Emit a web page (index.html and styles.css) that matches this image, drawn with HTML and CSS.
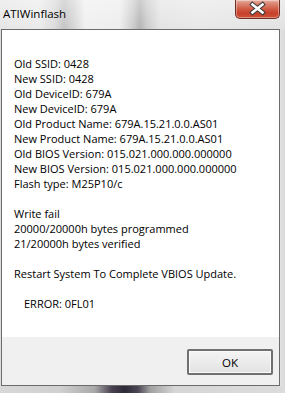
FILE: index.html
```html
<!DOCTYPE html>
<html>
<head>
<meta charset="utf-8">
<link rel="stylesheet" href="styles.css">
</head>
<body>
<div class="frame">
  <div class="titlebar">
    <span class="title">ATIWinflash</span>
    <div class="close">
      <svg width="45" height="19" viewBox="0 0 45 19">
        <path d="M17.5 5.5 L27.5 13.5 M27.5 5.5 L17.5 13.5" stroke="#3a3a3a" stroke-width="4.6" stroke-linecap="square" fill="none"/>
        <path d="M17.5 5.5 L27.5 13.5 M27.5 5.5 L17.5 13.5" stroke="#ffffff" stroke-width="2.6" stroke-linecap="square" fill="none"/>
      </svg>
    </div>
  </div>
  <div class="client">
    <div class="content">
      <div class="line">Old SSID: 0428</div>
      <div class="line">New SSID: 0428</div>
      <div class="line">Old DeviceID: 679A</div>
      <div class="line">New DeviceID: 679A</div>
      <div class="line">Old Product Name: 679A.15.21.0.0.AS01</div>
      <div class="line">New Product Name: 679A.15.21.0.0.AS01</div>
      <div class="line">Old BIOS Version: 015.021.000.000.000000</div>
      <div class="line">New BIOS Version: 015.021.000.000.000000</div>
      <div class="line">Flash type: M25P10/c</div>
      <div class="line gap">Write fail</div>
      <div class="line">20000/20000h bytes programmed</div>
      <div class="line">21/20000h bytes verified</div>
      <div class="line gap">Restart System To Complete VBIOS Update.</div>
      <div class="line gap error">ERROR: 0FL01</div>
    </div>
    <div class="footer">
      <button class="ok">OK</button>
    </div>
  </div>
  <div class="bottomstrip"></div>
</div>
</body>
</html>
```
FILE: styles.css
```css
html, body {
  margin: 0;
  padding: 0;
}
body {
  width: 285px;
  height: 393px;
  overflow: hidden;
  font-family: "Open Sans", "Noto Sans", sans-serif;
}
.frame {
  width: 285px;
  height: 393px;
  display: flex;
  flex-direction: column;
  background: linear-gradient(90deg, #dedede 0px, #e2e2e2 280px, #d9d9d9 285px);
}
.titlebar {
  height: 29px;
  display: flex;
  justify-content: space-between;
  align-items: flex-start;
  background:
    linear-gradient(180deg, rgba(255,255,255,0.35) 0px, rgba(255,255,255,0) 29px),
    linear-gradient(90deg,
      #e6e6e6 0px, #ebebeb 40px, #dadada 55px, #c4c4c4 64px, #d6d6d6 74px,
      #f0f0f0 85px, #ededed 120px, #cfcfcf 132px, #b4b4b4 140px, #cbcbcb 147px,
      #e4e4e4 160px, #e8e8e8 200px, #e2e2e2 285px);
}
.title {
  font-family: "Open Sans", sans-serif;
  font-size: 11.5px;
  color: #000;
  margin: 6px 0 0 3px;
  line-height: 16px;
}
.close {
  width: 45px;
  height: 19px;
  margin-right: 5px;
  box-sizing: border-box;
  border: 1px solid #6e2e24;
  border-top: none;
  border-radius: 0 0 5px 5px;
  background: linear-gradient(180deg, #e8b3a6 0px, #dc8d7b 3px, #cf5a44 9px, #c8402b 13px, #d0553b 19px);
  box-shadow: inset 0 0 0 1px rgba(255,255,255,0.35);
  overflow: hidden;
}
.close svg {
  display: block;
  margin: -1px 0 0 -1px;
}
.client {
  margin: 0 5px 0 1px;
  height: 357px;
  box-sizing: border-box;
  border: 1px solid #6b6b6b;
  display: flex;
  flex-direction: column;
}
.content {
  background: #ffffff;
  height: 307px;
  padding: 26px 0 0 12px;
  box-sizing: border-box;
  font-size: 11px;
  line-height: 15px;
  color: #000;
}
.line {
  white-space: nowrap;
}
.gap {
  margin-top: 15px;
}
.error {
  padding-left: 10px;
}
.footer {
  flex: 1;
  background: #f0f0f0;
  display: flex;
  justify-content: flex-end;
  align-items: flex-start;
  padding: 12px 6px 0 0;
}
.ok {
  width: 86px;
  height: 26px;
  box-sizing: border-box;
  border: 2px solid #707070;
  border-radius: 2px;
  background: linear-gradient(180deg, #f4f4f4 0%, #ececec 50%, #e2e2e2 100%);
  box-shadow: inset 0 0 0 1px #fafafa;
  font-family: "Open Sans", sans-serif;
  font-size: 11.5px;
  color: #000;
  padding: 0;
}
.bottomstrip {
  flex: 1;
  background: linear-gradient(90deg,
    #d8d8d8 0px, #d0d0d0 60px, #a8a8a8 95px, #4a4050 112px, #2e2a36 125px,
    #4c4654 138px, #a0a0a0 150px, #d6d6d6 175px, #dcdcdc 285px);
}
```
